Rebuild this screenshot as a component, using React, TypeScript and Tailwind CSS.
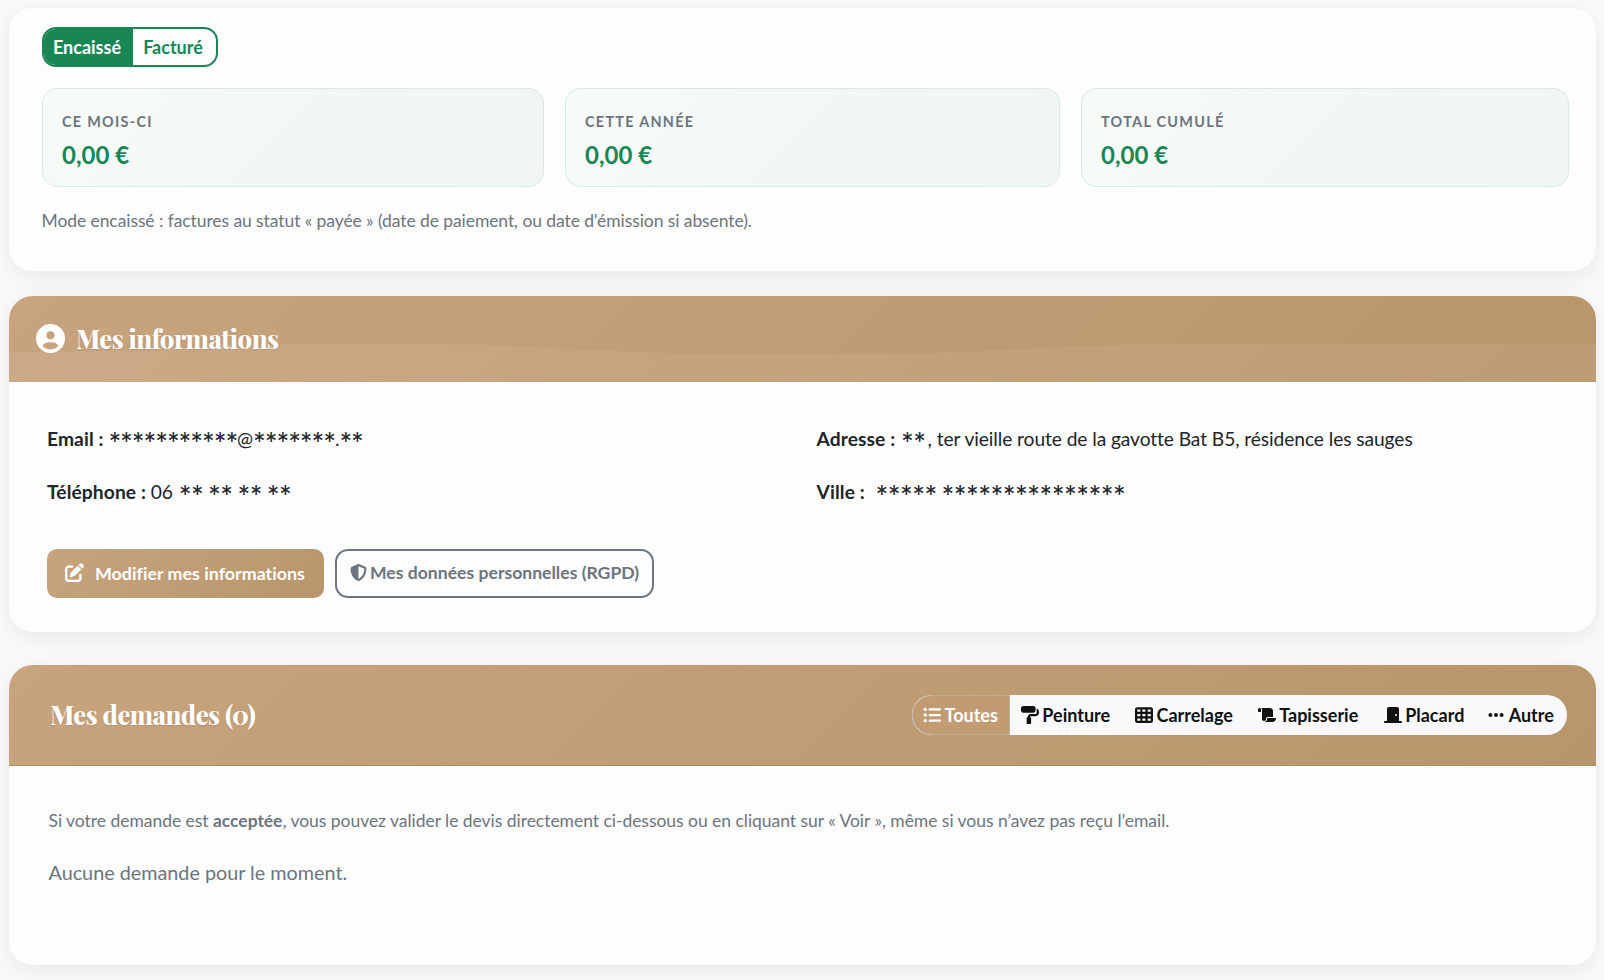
import React from 'react';
import type { IconType } from 'react-icons';
import {
  FaCircleUser,
  FaDoorClosed,
  FaEllipsis,
  FaListUl,
  FaPaintRoller,
  FaPenToSquare,
  FaScroll,
  FaShieldHalved,
  FaTableCells,
} from 'react-icons/fa6';

// --- DATA ---
interface Stat {
  label: string;
  value: string;
}

const stats: Stat[] = [
  { label: 'Ce mois-ci', value: '0,00 €' },
  { label: 'Cette année', value: '0,00 €' },
  { label: 'Total cumulé', value: '0,00 €' },
];

const filters: { label: string; icon: IconType; width: string }[] = [
  { label: 'Toutes', icon: FaListUl, width: 'w-[98px] pr-px' },
  { label: 'Peinture', icon: FaPaintRoller, width: 'w-[112px] pr-px' },
  { label: 'Carrelage', icon: FaTableCells, width: 'w-[124px]' },
  { label: 'Tapisserie', icon: FaScroll, width: 'w-[125px] pr-px' },
  { label: 'Placard', icon: FaDoorClosed, width: 'w-[106px]' },
  { label: 'Autre', icon: FaEllipsis, width: 'w-[90px] pr-[3px]' },
];

// --- COMPONENTS ---
function Card({ className, children }: { className: string; children: React.ReactNode }) {
  return (
    <section
      className={`overflow-hidden rounded-[24px] bg-[#fdfdfd] shadow-[0_5px_25px_rgba(0,0,0,0.08)] ${className}`}
    >
      {children}
    </section>
  );
}

function Title({ children }: { children: string }) {
  return (
    <h2 className="relative mb-0.5 font-['Playfair_Display','Liberation_Serif',serif] text-[25.6px] leading-8 font-extrabold tracking-[-0.48px] whitespace-nowrap text-white [text-shadow:0_1px_2px_rgba(0,0,0,0.1)]">
      {children}
    </h2>
  );
}

function Field({ label, children }: { label: string; children: React.ReactNode }) {
  return (
    <p className="h-[30px] text-[19.2px] leading-[30px] tracking-[-0.1px] whitespace-pre text-[#212529]">
      <strong className="font-bold tracking-[0.1px]">{label} :</strong> {children}
    </p>
  );
}

// Caractères masqués, un peu plus grands que le texte courant
function Mask({ children, tight }: { children: string; tight?: boolean }) {
  return (
    <span
      className={`align-[-9px] text-[30px] leading-[0] font-medium [word-spacing:-2.2px] ${
        tight ? 'tracking-[-1.05px]' : 'ml-px tracking-[-0.5px]'
      }`}
    >
      {children}
    </span>
  );
}

export default function App() {
  return (
    <main className="flex h-[980px] w-[1604px] flex-col overflow-hidden bg-[#f9faf9] pt-2 pr-2 pl-[9px] font-['Lato',sans-serif] [font-variant-ligatures:none]">
      {/* Chiffre d'affaires */}
      <Card className="h-[263px] shrink-0 pt-[19px] pl-[32.5px]">
        <div className="flex h-10 w-[176px] overflow-hidden rounded-[14px] border-2 border-[#198754] text-[18px] font-bold">
          <button className="w-[89px] bg-[#198754] pr-0.5 text-white">Encaissé</button>
          <button className="flex-1 pr-0.5 text-[#198754]">Facturé</button>
        </div>
        <div className="mt-[21px] grid w-[1527px] grid-cols-[502px_495px_488px] justify-between">
          {stats.map((s) => (
            <div
              key={s.label}
              className="h-[99px] rounded-[15px] border border-[#d8eae3] bg-linear-135 from-[#f7fbf8] via-[#f2f6f5] to-[#f1f5f5] px-[19.5px] pt-[23px]"
            >
              <p className="text-[14.4px] leading-5 font-bold tracking-[1.3px] text-[#6c757d] uppercase">{s.label}</p>
              <p className="mt-[9px] text-[24px] leading-7 font-bold text-[#198754]">{s.value}</p>
            </div>
          ))}
        </div>
        <p className="mt-[21px] text-[17.5px] leading-[26px] tracking-[-0.08px] text-[#6c757d]">
          Mode encaissé : factures au statut « payée » (date de paiement, ou date d'émission si absente).
        </p>
      </Card>

      {/* Mes informations */}
      <Card className="mt-[25px] h-[336px] shrink-0">
        <header className="relative flex h-[86px] items-center bg-linear-135 from-[#c8a47e] to-[#b8956a] pl-[27px]">
          <svg className="absolute inset-0 h-full w-full" viewBox="0 0 1587 86" preserveAspectRatio="none">
            <path
              d="M0 57C100 55 220 48 300 48H420C520 48 600 57 700 57.5H870C1000 57 1060 48 1160 48H1587V86H0Z"
              fill="#fff"
              fillOpacity="0.07"
            />
          </svg>
          <FaCircleUser className="relative mr-[11px] mb-px size-[29px] text-white" />
          <Title>Mes informations</Title>
        </header>
        <div className="grid grid-cols-[769.5px_1fr] gap-y-[23px] pt-[42px] pl-[38px]">
          <Field label="Email">
            <Mask tight>***********</Mask>@<Mask tight>*******</Mask>.<Mask tight>**</Mask>
          </Field>
          <Field label="Adresse">
            <Mask>**</Mask>
            <span className="ml-0.5 tracking-[-0.08px]">
              , ter vieille route de la gavotte Bat B5, résidence les sauges
            </span>
          </Field>
          <Field label="Téléphone">
            06 <Mask>** ** ** **</Mask>
          </Field>
          <Field label="Ville">
            {' '}
            <Mask>***** ***************</Mask>
          </Field>
        </div>
        <div className="mt-[42px] flex gap-[11px] pl-[38px]">
          <button className="flex h-[49px] w-[277px] items-center rounded-[10px] bg-linear-135 from-[#c8a47e] to-[#b8956a] pl-[18px] text-[17.85px] font-bold text-white">
            <FaPenToSquare className="mr-[11px] mb-0.5 size-[19px]" />
            Modifier mes informations
          </button>
          <button className="flex h-[49px] w-[319px] items-center rounded-[13px] border-2 border-[#6c757d] pb-px pl-[13px] text-[17.6px] font-bold text-[#6c757d]">
            <FaShieldHalved className="mr-[3px] mb-px size-[17px]" />
            Mes données personnelles (RGPD)
          </button>
        </div>
      </Card>

      {/* Mes demandes */}
      <Card className="mt-[33px] h-[300px] shrink-0">
        <header className="flex h-[101px] items-center justify-between border-b border-[#b08c63] bg-linear-135 from-[#c8a47e] to-[#b8956a] pr-[29px] pl-[41px]">
          <Title>Mes demandes (0)</Title>
          <nav className="flex h-10 overflow-hidden rounded-[20px] bg-[#f8f9fa]">
            {filters.map(({ label, icon: Icon, width }, i) => (
              <button
                key={label}
                className={`flex shrink-0 items-center justify-center gap-[3.5px] text-[18px] font-bold ${width} ${
                  i === 0 ? 'rounded-l-[20px] border border-[#b5b0a5] bg-[#c19c73] text-white' : 'text-[#111]'
                }`}
              >
                <Icon className="h-[18px] w-auto" />
                {label}
              </button>
            ))}
          </nav>
        </header>
        <div className="pt-[42px] pl-[39.5px] text-[#6c757d]">
          <p className="text-[17.5px] leading-[26px] tracking-[-0.035px]">
            Si votre demande est <strong>acceptée</strong>, vous pouvez valider le devis directement ci-dessous ou en
            cliquant sur « Voir », même si vous n’avez pas reçu l’email.
          </p>
          <p className="mt-[23px] text-[19.8px] leading-[30px]">Aucune demande pour le moment.</p>
        </div>
      </Card>
    </main>
  );
}
